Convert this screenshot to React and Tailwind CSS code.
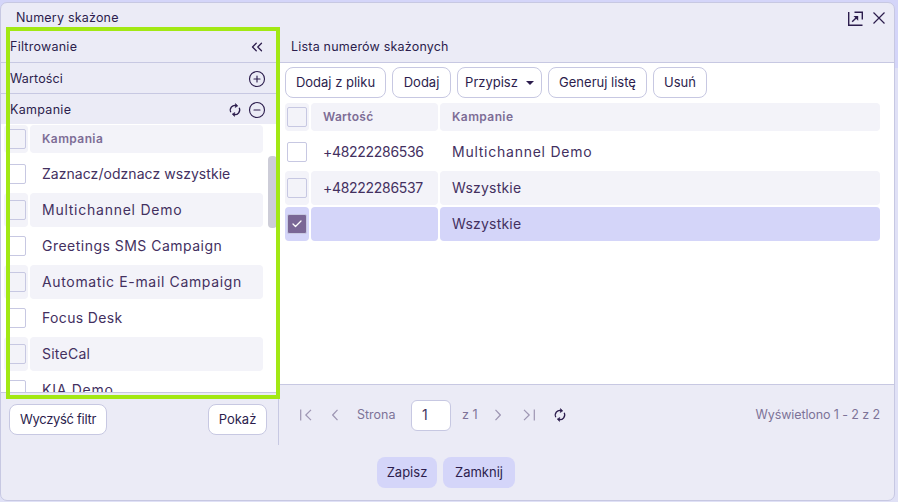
import React from 'react';
import { ChevronsLeft, CirclePlus, CircleMinus, Check } from 'lucide-react';

const campaigns = [
  { name: 'Zaznacz/odznacz wszystkie', track: 'tracking-[0.05px]' },
  { name: 'Multichannel Demo', track: 'tracking-[0.75px]' },
  { name: 'Greetings SMS Campaign', track: 'tracking-[0.48px]' },
  { name: 'Automatic E-mail Campaign', track: 'tracking-[0.65px]' },
  { name: 'Focus Desk', track: 'tracking-[0.35px]' },
  { name: 'SiteCal', track: 'tracking-[0.25px]' },
  { name: 'KIA Demo', track: 'tracking-[0.75px]' },
];

const rows = [
  { value: '+48222286536', campaign: 'Multichannel Demo', tone: 'white', track: 'tracking-[0.75px]' },
  { value: '+48222286537', campaign: 'Wszystkie', tone: 'gray', track: 'tracking-[0.2px]' },
  { value: '', campaign: 'Wszystkie', tone: 'selected', checked: true, track: 'tracking-[0.2px]' },
];

const toneClass = {
  white: 'bg-white',
  gray: 'bg-[#f3f3f9]',
  selected: 'bg-[#d4d5f9]',
};

const Sync = ({ className }) => (
  <svg viewBox="0 0 16 16" fill="none" stroke="currentColor" strokeWidth="1.4" className={className}>
    <path d="M3.2 10.5A5.4 5.4 0 0 1 9.6 2.9" />
    <path d="M12.8 5.5A5.4 5.4 0 0 1 6.4 13.1" />
    <path d="M8.6 0.6 L11.2 3.3 L8.2 5.2 Z" fill="currentColor" strokeWidth="0.6" />
    <path d="M7.4 15.4 L4.8 12.7 L7.8 10.8 Z" fill="currentColor" strokeWidth="0.6" />
  </svg>
);

const Popout = ({ className }) => (
  <svg viewBox="0 0 15 15" fill="none" stroke="currentColor" strokeWidth="1.4" className={className}>
    <path d="M0.7 1v13.3H14.5" />
    <path d="M6.5 1.2h7.8V8.5" />
    <path d="M4.2 10.8 8.5 6.5" />
    <path d="M5.5 5h4.7v4.7z" fill="currentColor" stroke="none" />
  </svg>
);

const CloseIcon = ({ className }) => (
  <svg viewBox="0 0 12 12" fill="none" stroke="currentColor" strokeWidth="1.2" className={className}>
    <path d="M0.5 0.5 11.5 11.5M11.5 0.5 0.5 11.5" />
  </svg>
);

const PageEdge = ({ flip }) => (
  <svg viewBox="0 0 12 12" fill="none" stroke="currentColor" strokeWidth="1.2" className={`w-3 h-3 shrink-0 ${flip ? 'rotate-180' : ''}`}>
    <path d="M0.7 0.5v11" />
    <path d="M11 0.8 5.8 6l5.2 5.2" />
  </svg>
);

const PageStep = ({ flip }) => (
  <svg viewBox="0 0 6 12" fill="none" stroke="currentColor" strokeWidth="1.2" className={`w-[6px] h-3 shrink-0 ${flip ? 'rotate-180' : ''}`}>
    <path d="M5.5 0.8 0.7 6l4.8 5.2" />
  </svg>
);

const Box = ({ checked }) => (
  <div className={`w-5 h-5 rounded-[2px] border border-[#c7c8e2] flex items-center justify-center ${checked ? 'bg-[#7a6796]' : 'bg-transparent'}`}>
    {checked && <Check className="w-3 h-3 text-white" strokeWidth={2.5} />}
  </div>
);

const Btn = ({ children, className = '' }) => (
  <button className={`h-[31px] bg-white border border-[#c7c8e2] rounded-lg text-[13px] text-[#2c1d4d] whitespace-nowrap flex items-center justify-center ${className}`}>
    {children}
  </button>
);

export default function App() {
  return (
    <div className="w-[898px] h-[502px] bg-[linear-gradient(#d4d5f9_68px,#e0e1f6_68px)] pt-[2px] overflow-hidden text-[#2c1d4d]" style={{ fontFamily: 'Inter, sans-serif' }}>
      <div className="relative w-[895px] h-[499px] bg-[#ebebf6] border border-[#c7c8e2] rounded-[7px] flex flex-col">
        {/* title bar */}
        <div className="h-[27px] flex items-center justify-between pl-[15px] pr-[9px] pt-[3px] shrink-0">
          <span className="text-[12.5px] tracking-[0.2px]">Numery skażone</span>
          <div className="flex items-center gap-[10px]">
            <Popout className="w-[15px] h-[15px]" />
            <CloseIcon className="w-3 h-3" />
          </div>
        </div>

        <div className="flex flex-1 min-h-0">
          {/* filter panel */}
          <div className="w-[278px] shrink-0 border-r border-[#c7c8e2] flex flex-col h-[415px]">
            <div className="h-[33px] pl-[9px] pr-[12px] pt-[2px] flex items-center justify-between border-b border-[#c7c8e2] text-[12.5px] tracking-[0.25px]">
              <span>Filtrowanie</span>
              <ChevronsLeft className="w-[18px] h-[18px]" strokeWidth={1.7} />
            </div>
            <div className="h-[31px] pl-[9px] pr-[12px] pt-[2px] flex items-center justify-between border-b border-[#c7c8e2] text-[12.5px] tracking-[0.15px]">
              <span>Wartości</span>
              <CirclePlus className="w-[18px] h-[18px]" strokeWidth={1.5} />
            </div>
            <div className="h-[30px] pl-[9px] pr-[12px] pt-[2px] flex items-center justify-between text-[12.5px] tracking-[0.3px]">
              <span>Kampanie</span>
              <div className="flex items-center gap-[6px]">
                <Sync className="w-[14px] h-[14px]" />
                <CircleMinus className="w-[18px] h-[18px]" strokeWidth={1.5} />
              </div>
            </div>
            <div className="relative h-[268px] bg-white overflow-hidden pt-[1px] pl-[3px] pr-[15px]">
              <div className="flex gap-[2px] h-[28px] mb-[4px]">
                <div className="w-[24px] rounded bg-[#f3f3f9] flex items-center justify-center shrink-0"><Box /></div>
                <div className="flex-1 rounded bg-[#f3f3f9] flex items-center pl-[12px] text-[12px] font-semibold text-[#7d6d96] tracking-[0.4px]">Kampania</div>
              </div>
              <div className="flex flex-col gap-[2px]">
                {campaigns.map((c, i) => (
                  <div key={c.name} className="flex gap-[2px] h-[34px] shrink-0">
                    <div className={`w-[24px] rounded flex items-center justify-center shrink-0 ${i % 2 ? 'bg-[#f3f3f9]' : 'bg-white'}`}><Box /></div>
                    <div className={`flex-1 rounded flex items-center pl-[12px] pb-[2px] text-[14px] text-[#43305f] ${c.track} ${i % 2 ? 'bg-[#f3f3f9]' : 'bg-white'}`}>{c.name}</div>
                  </div>
                ))}
              </div>
              <div className="absolute right-[1px] top-[32px] w-[9px] h-[72px] rounded bg-[#cdcdd8]" />
            </div>
            <div className="border-t border-[#c7c8e2] flex items-center justify-between pl-[8px] pr-[11px] pt-[11px]">
              <Btn className="w-[98px] tracking-[-0.3px]">Wyczyść filtr</Btn>
              <Btn className="w-[59px]">Pokaż</Btn>
            </div>
          </div>

          {/* list panel */}
          <div className="flex-1 min-w-0 flex flex-col h-[415px]">
            <div className="h-[33px] pl-[12px] pt-[2px] flex items-center border-b border-[#c7c8e2] text-[12.5px] tracking-[0.2px]">Lista numerów skażonych</div>
            <div className="h-[322px] bg-white border-b border-[#c7c8e2] pl-[6px] pr-[14px] pt-[4px]">
              <div className="flex gap-[6px]">
                <Btn className="w-[101px]">Dodaj z pliku</Btn>
                <Btn className="w-[59px]">Dodaj</Btn>
                <Btn className="w-[85px] gap-[8px]">
                  Przypisz
                  <span className="w-0 h-0 border-x-[4px] border-x-transparent border-t-[4px] border-t-[#2c1d4d]" />
                </Btn>
                <Btn className="w-[99px]">Generuj listę</Btn>
                <Btn className="w-[54px]">Usuń</Btn>
              </div>
              <div className="flex gap-[2px] h-[28px] mt-[5px] mb-[4px]">
                <div className="w-[24px] rounded bg-[#f3f3f9] flex items-center justify-center shrink-0"><Box /></div>
                <div className="w-[127px] rounded bg-[#f3f3f9] flex items-center pl-[12px] text-[12px] font-semibold text-[#7d6d96] tracking-[0.3px]">Wartość</div>
                <div className="flex-1 rounded bg-[#f3f3f9] flex items-center pl-[12px] text-[12px] font-semibold text-[#7d6d96] tracking-[0.4px]">Kampanie</div>
              </div>
              <div className="flex flex-col gap-[2px]">
                {rows.map((row, i) => (
                  <div key={i} className="flex gap-[2px] h-[34px]">
                    <div className={`w-[24px] rounded flex items-center justify-center shrink-0 ${toneClass[row.tone]}`}><Box checked={row.checked} /></div>
                    <div className={`w-[127px] rounded flex items-center pl-[12px] pb-[2px] text-[14px] tracking-[-0.3px] text-[#43305f] ${toneClass[row.tone]}`}>{row.value}</div>
                    <div className={`flex-1 rounded flex items-center pl-[12px] pb-[2px] text-[14px] text-[#43305f] ${row.track} ${toneClass[row.tone]}`}>{row.campaign}</div>
                  </div>
                ))}
              </div>
            </div>
            <div className="flex-1 flex items-center pl-[21px] pr-[14px] text-[12.5px] text-[#7d7398]">
              <span className="text-[#9d95b2] flex items-center"><PageEdge /></span>
              <span className="ml-[20px] text-[#9d95b2] flex items-center"><PageStep /></span>
              <span className="ml-[19px] w-[40px]">Strona</span>
              <div className="ml-[14px] w-[40px] h-[31px] bg-white border border-[#c7c8e2] rounded-md text-[14px] text-[#43305f] pl-[10px] pt-[3px]">1</div>
              <span className="ml-[11px] w-[14px] whitespace-nowrap">z 1</span>
              <span className="ml-[19px] text-[#9d95b2] flex items-center"><PageStep flip /></span>
              <span className="ml-[22px] text-[#9d95b2] flex items-center"><PageEdge flip /></span>
              <Sync className="w-[14px] h-[14px] ml-[18px] text-[#2c1d4d]" />
              <span className="ml-auto tracking-[-0.1px]">Wyświetlono 1 - 2 z 2</span>
            </div>
          </div>
        </div>

        {/* footer */}
        <div className="h-[56px] shrink-0 flex justify-center gap-[6px] pt-[13px] pr-[3px]">
          <button className="w-[60px] h-[31px] rounded-lg bg-[#d4d5f9] text-[13px] text-[#2c1d4d]">Zapisz</button>
          <button className="w-[72px] h-[31px] rounded-lg bg-[#d4d5f9] text-[13px] text-[#2c1d4d]">Zamknij</button>
        </div>

        {/* green highlight over the filter panel */}
        <div className="absolute left-[5px] top-[24px] w-[274px] h-[372px] border-[4px] border-[#a2e813] pointer-events-none" />
      </div>
    </div>
  );
}
